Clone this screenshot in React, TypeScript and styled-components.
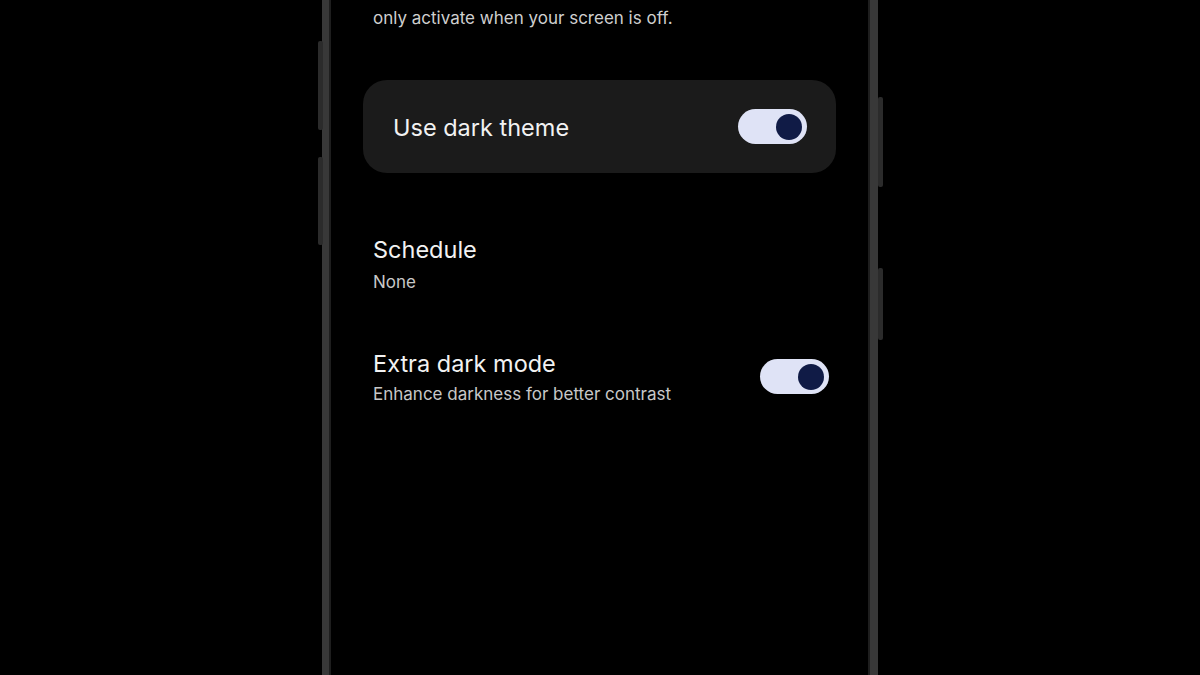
import React from "react";
import styled, { createGlobalStyle } from "styled-components";

const GlobalStyle = createGlobalStyle`
  html, body {
    margin: 0;
    padding: 0;
    background: #000;
  }
  body {
    font-family: "Inter", "Roboto", "Noto Sans", sans-serif;
    color: #f1f1f1;
    overflow: hidden;
  }
`;

const Stage = styled.div`
  width: 1200px;
  height: 675px;
  display: flex;
  justify-content: center;
  background: #000;
  overflow: hidden;
`;

const Phone = styled.div`
  position: relative;
  width: 541px;
  height: 675px;
  border-left: 7px solid #383838;
  border-right: 8px solid #383838;
  box-shadow: inset 2px 0 0 #1e1e1e, inset -2px 0 0 #1e1e1e;
`;

const SideKey = styled.div<{ $side: "left" | "right"; $top: number; $len: number }>`
  position: absolute;
  top: ${(p) => p.$top}px;
  ${(p) => (p.$side === "left" ? "left: -11px;" : "right: -13px;")}
  width: 5px;
  height: ${(p) => p.$len}px;
  background: #2b2b2b;
  border-radius: 2px;
`;

const Screen = styled.div`
  display: flex;
  flex-direction: column;
  padding: 0 34px 0 34px;
  overflow: hidden;
  height: 100%;
`;

const Intro = styled.p`
  margin: 6px 0 0;
  padding: 0 7px 0 10px;
  font-size: 17px;
  line-height: 24px;
  color: #cfcfcf;
`;

const Card = styled.div`
  margin-top: 50px;
  height: 93px;
  background: #1b1b1b;
  border-radius: 24px;
  display: flex;
  align-items: center;
  justify-content: space-between;
  padding: 0 29px 0 30px;
`;

const CardLabel = styled.span`
  font-size: 23.5px;
  line-height: 32px;
  color: #f2f2f2;
  padding-top: 2px;
`;

const Row = styled.div<{ $top: number }>`
  margin-top: ${(p) => p.$top}px;
  display: flex;
  align-items: center;
  justify-content: space-between;
  padding: 0 7px 0 10px;
`;

const TextBlock = styled.div`
  display: flex;
  flex-direction: column;
`;

const Title = styled.span`
  font-size: 23.5px;
  line-height: 32px;
  color: #f2f2f2;
`;

const Sub = styled.span<{ $gap: number }>`
  margin-top: ${(p) => p.$gap}px;
  font-size: 17px;
  line-height: 22px;
  color: #c8c8c8;
`;

const Track = styled.div`
  width: 69px;
  height: 35px;
  border-radius: 18px;
  background: #dfe3f6;
  display: flex;
  align-items: center;
  justify-content: flex-end;
  padding-right: 5px;
  box-sizing: border-box;
`;

const Thumb = styled.div`
  width: 26px;
  height: 26px;
  border-radius: 50%;
  background: #101b46;
`;

function Toggle() {
  return (
    <Track>
      <Thumb />
    </Track>
  );
}

export default function App() {
  return (
    <Stage>
      <GlobalStyle />
      <Phone>
        <SideKey $side="left" $top={41} $len={89} />
        <SideKey $side="left" $top={157} $len={88} />
        <SideKey $side="right" $top={97} $len={90} />
        <SideKey $side="right" $top={268} $len={72} />
        <Screen>
          <Intro>only activate when your screen is off.</Intro>
          <Card>
            <CardLabel>Use dark theme</CardLabel>
            <Toggle />
          </Card>
          <Row $top={61}>
            <TextBlock>
              <Title>Schedule</Title>
              <Sub $gap={5}>None</Sub>
            </TextBlock>
          </Row>
          <Row $top={55}>
            <TextBlock>
              <Title>Extra dark mode</Title>
              <Sub $gap={3}>Enhance darkness for better contrast</Sub>
            </TextBlock>
            <Toggle />
          </Row>
        </Screen>
      </Phone>
    </Stage>
  );
}
